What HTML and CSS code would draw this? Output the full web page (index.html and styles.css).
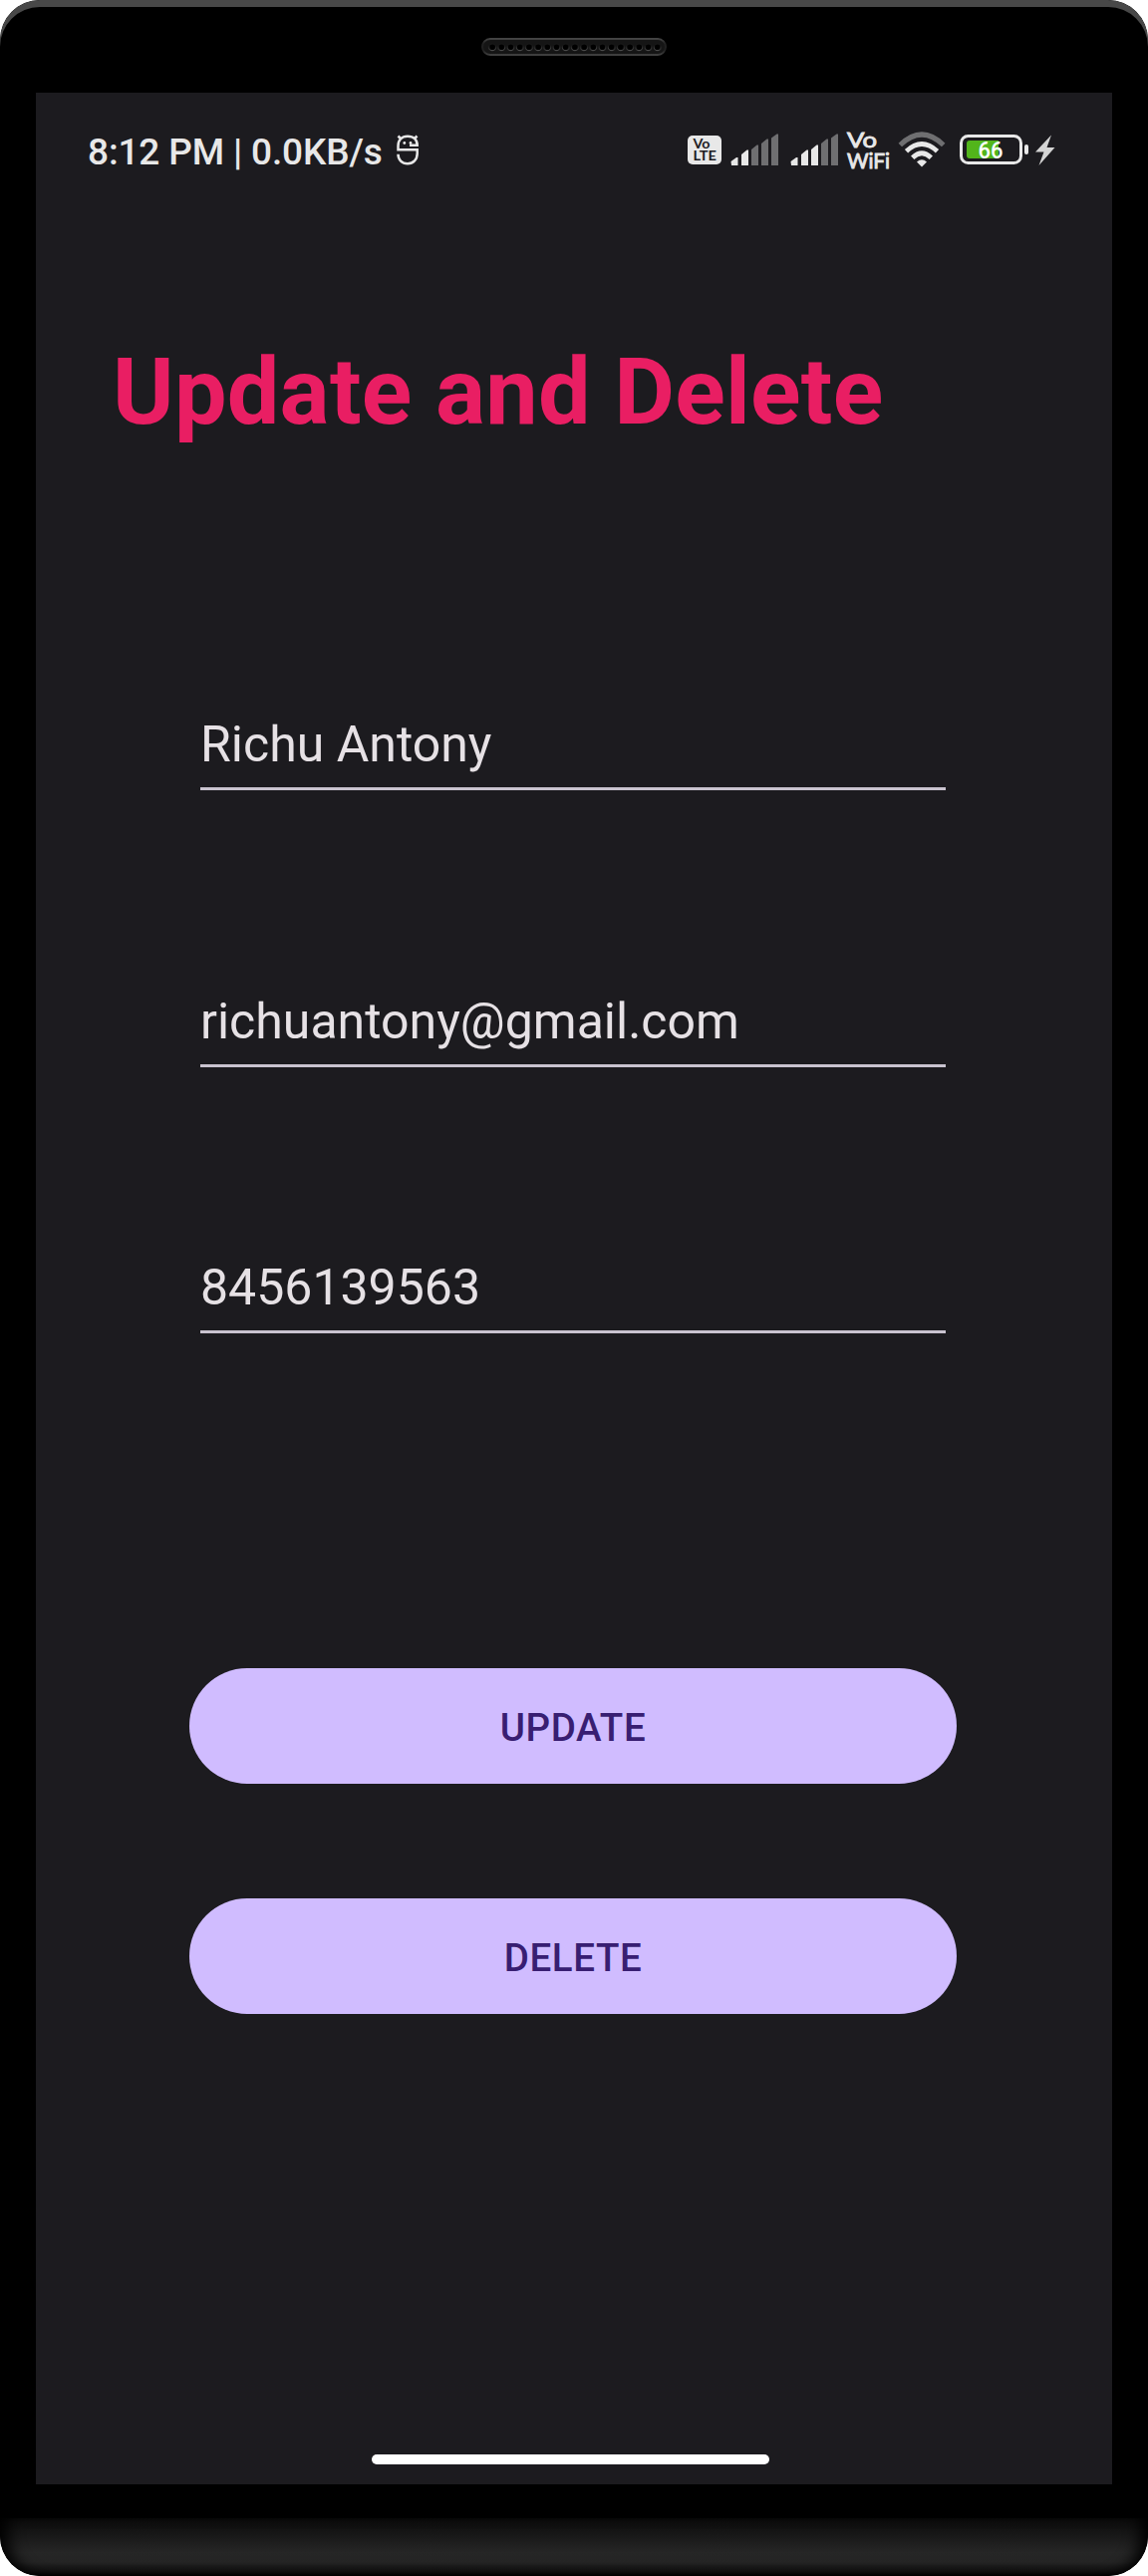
FILE: index.html
```html
<!DOCTYPE html>
<html lang="en">
<head>
<meta charset="utf-8">
<title>Update and Delete</title>
<link rel="stylesheet" href="styles.css">
</head>
<body>
<div class="phone">
  <div class="bezel-top">
    <svg class="speaker" width="186" height="18" viewBox="0 0 186 18">
      <defs>
        <linearGradient id="rim" x1="0" y1="0" x2="0" y2="1"><stop offset="0" stop-color="#444"/><stop offset=".3" stop-color="#202020"/><stop offset=".7" stop-color="#202020"/><stop offset="1" stop-color="#404040"/></linearGradient>
        <linearGradient id="holeRim" x1="0" y1="0" x2="0" y2="1"><stop offset=".3" stop-color="#1a1a1a"/><stop offset="1" stop-color="#5c5c5c"/></linearGradient>
        <pattern id="holes" x="6.500" y="0" width="9.200" height="18" patternUnits="userSpaceOnUse"><circle cx="4.600" cy="9.300" r="3.400" fill="#000" stroke="url(#holeRim)" stroke-width="1"/></pattern>
      </defs>
      <rect x="1" y="1" width="184" height="16" rx="8" fill="#151515" stroke="url(#rim)" stroke-width="2"/>
      <rect x="6.500" y="0" width="174.800" height="18" fill="url(#holes)"/>
    </svg>
  </div>
  <main class="screen">
    <header class="status">
      <span class="clock">8:12 PM | 0.0KB/s</span>
      <svg class="debug" width="24" height="44" viewBox="397 128 24 44" fill="none" stroke="#e8e8e8" stroke-width="2.500">
        <path d="M411 145.800h7.700C418.700 140 415 136.700 409 136.700s-9.500 4-9.500 9.800v3.700h19.200V154c0 6-4 10.200-9.700 10.200s-9.500-4-9.500-9.400M402.500 139.500l-3-3M415.500 139.500l3-3"/>
        <circle cx="405.800" cy="143.500" r="1.400" fill="#e8e8e8" stroke="none"/><circle cx="412" cy="143.500" r="1.400" fill="#e8e8e8" stroke="none"/>
      </svg>
      <div class="indicators">
        <svg width="34" height="44" viewBox="690 128 34 44">
          <rect x="690" y="136" width="34" height="29" rx="5" fill="#e8e8e8"/>
          <text class="tag" x="695.500" y="149" font-size="12.500" textLength="17" lengthAdjust="spacingAndGlyphs" fill="#1c1b1f">Vo</text>
          <text class="tag" x="695.500" y="161.300" font-size="13" textLength="23.500" lengthAdjust="spacingAndGlyphs" fill="#1c1b1f">LTE</text>
        </svg>
        <svg class="signal" width="48" height="44" viewBox="733 128 48 44">
          <path class="on" d="M733.500 162l5.500-4h1.500v8h-6.500zM744 155l5.500-4.500h1.500V166h-7z"/>
          <path class="off" d="M754 150l5.500-4.500h1.500V166h-7zM764 144l5.500-4.500h1.500V166h-7zM774 138.500l5.500-4h1.500V166h-7z"/>
        </svg>
        <svg class="signal second" width="48" height="44" viewBox="733 128 48 44">
          <path class="on" d="M733.500 162l5.500-4h1.500v8h-6.500zM744 155l5.500-4.500h1.500V166h-7zM754 150l5.500-4.500h1.500V166h-7z"/>
          <path class="off" d="M764 144l5.500-4.500h1.500V166h-7zM774 138.500l5.500-4h1.500V166h-7z"/>
        </svg>
        <svg class="vowifi" width="45" height="56" viewBox="849 122 45 56">
          <text class="tag light" x="850" y="147.500" font-size="22" textLength="30" lengthAdjust="spacingAndGlyphs" fill="#e8e8e8">Vo</text>
          <text class="tag light" x="850" y="169" font-size="21.500" textLength="43" lengthAdjust="spacingAndGlyphs" fill="#e8e8e8">WiFi</text>
        </svg>
        <svg class="wifi" width="48" height="44" viewBox="901 128 48 44" fill="none" stroke="#e8e8e8" stroke-width="4.800">
          <path d="M903.300 145.500Q925 124.500 946.700 145.500" stroke="#6f6f71" stroke-width="5"/>
          <path d="M909.500 151.700Q925 137.300 940.500 151.700M915.700 158.300Q925 149.300 934.300 158.300"/>
          <path d="M920 162.500q5-4.500 10 0l-5 5z" fill="#e8e8e8" stroke="none"/>
        </svg>
        <svg class="battery" width="70" height="44" viewBox="962 128 70 44">
          <rect x="964.500" y="136.500" width="60" height="27" rx="7" fill="none" stroke="#e8e8e8" stroke-width="3"/>
          <path d="M973 141h29v18h-29a3 3 0 0 1-3-3v-12a3 3 0 0 1 3-3z" fill="#52b51b"/>
          <rect x="1028" y="145" width="4" height="10" rx="2" fill="#e8e8e8"/>
          <text class="level" x="981.500" y="158.500" font-size="23" textLength="25" lengthAdjust="spacingAndGlyphs" fill="#fff">66</text>
        </svg>
        <svg class="bolt" width="20" height="44" viewBox="1039 128 20 44"><path d="M1055 135.500l-16 17h8.500l-5 13.500 16-18h-8z" fill="#d4d4d4"/></svg>
      </div>
    </header>
    <h1 class="title">Update and Delete</h1>
    <form class="form">
      <input class="field" type="text" value="Richu Antony" aria-label="Name">
      <input class="field" type="text" value="richuantony@gmail.com" aria-label="Email">
      <input class="field phone-field" type="text" value="8456139563" aria-label="Phone">
      <button class="button" type="button">UPDATE</button>
      <button class="button" type="button">DELETE</button>
    </form>
    <div class="home-bar"></div>
  </main>
  <div class="chin"></div>
</div>
</body>
</html>
```
FILE: styles.css
```css
* { box-sizing: border-box; }

body {
  margin: 0;
  background: #fff;
  font-family: Roboto, "Liberation Sans", sans-serif;
}

.phone {
  display: flex;
  flex-direction: column;
  align-items: center;
  width: 1152px;
  height: 2585px;
  border-radius: 40px;
  overflow: hidden;
  background: #000;
}

.bezel-top {
  width: 100%;
  height: 93px;
  flex: none;
  display: flex;
  justify-content: center;
  padding-top: 38px;
  border-radius: 40px 40px 0 0;
  box-shadow: inset 0 7px 0 #484848;
}

.speaker { display: block; }

.screen {
  display: flex;
  flex-direction: column;
  width: 1080px;
  height: 2400px;
  flex: none;
  background: #1c1b1f;
}

.status {
  display: flex;
  align-items: center;
  height: 56px;
  margin-top: 29px;
  padding-left: 52px;
  padding-right: 57px;
}

.status svg { display: block; flex: none; }

.clock {
  width: 309px;
  padding-top: 5px;
  font-size: 37px;
  font-weight: 500;
  line-height: 44px;
  letter-spacing: -.15px;
  white-space: nowrap;
  color: #e8e8e8;
}

.indicators {
  display: flex;
  align-items: center;
  margin-left: auto;
}

.signal { margin-left: 9px; }
.signal.second { margin-left: 12px; }
.signal .on { fill: #e8e8e8; }
.signal .off { fill: #6f6f71; }
.vowifi { margin-left: 8px; }
.wifi { margin-left: 7px; }
.battery { margin-left: 13px; }
.bolt { margin-left: 7px; }

.tag { font-family: Lato, sans-serif; font-weight: 700; }
.tag.light { font-weight: 400; stroke: #e8e8e8; stroke-width: .9px; }
.level { font-family: Roboto, sans-serif; font-weight: 500; }

.title {
  margin: 160px 0 0 77px;
  font-size: 93.5px;
  line-height: 110px;
  letter-spacing: .25px;
  font-weight: 700;
  white-space: nowrap;
  color: #e91e63;
}

.form {
  display: flex;
  flex-direction: column;
  align-items: center;
  margin-top: 264px;
  padding-right: 2px;
}

.field {
  width: 748px;
  height: 81px;
  margin: 0 0 197px;
  padding: 0 0 8px;
  border: 0;
  border-bottom: 3px solid #c9c3cf;
  border-radius: 0;
  outline: 0;
  background: transparent;
  font: 400 50px/60px Roboto, "Liberation Sans", sans-serif;
  color: #e6e1e5;
}

.field:nth-child(2) { margin-bottom: 186px; }
.field.phone-field { margin-bottom: 336px; }

.button {
  width: 770px;
  height: 116px;
  margin: 0 0 115px;
  padding: 4px 0 0;
  border: 0;
  border-radius: 58px;
  background: #d0bcff;
  color: #381e72;
  font: 500 38.5px/46px Roboto, "Liberation Sans", sans-serif;
  letter-spacing: .6px;
}

.home-bar {
  width: 399px;
  height: 10px;
  margin: auto auto 20px 337px;
  border-radius: 5px;
  background: #fff;
}

.chin {
  width: 100%;
  height: 58px;
  margin-top: 34px;
  flex: none;
  border-radius: 0 0 40px 40px;
  background: linear-gradient(#0b0b0b, #181818 30%, #262626 60%, #242424 76%, #111 92%, #000);
  box-shadow: inset 16px 0 16px -8px #000, inset -16px 0 16px -8px #000;
}
```
